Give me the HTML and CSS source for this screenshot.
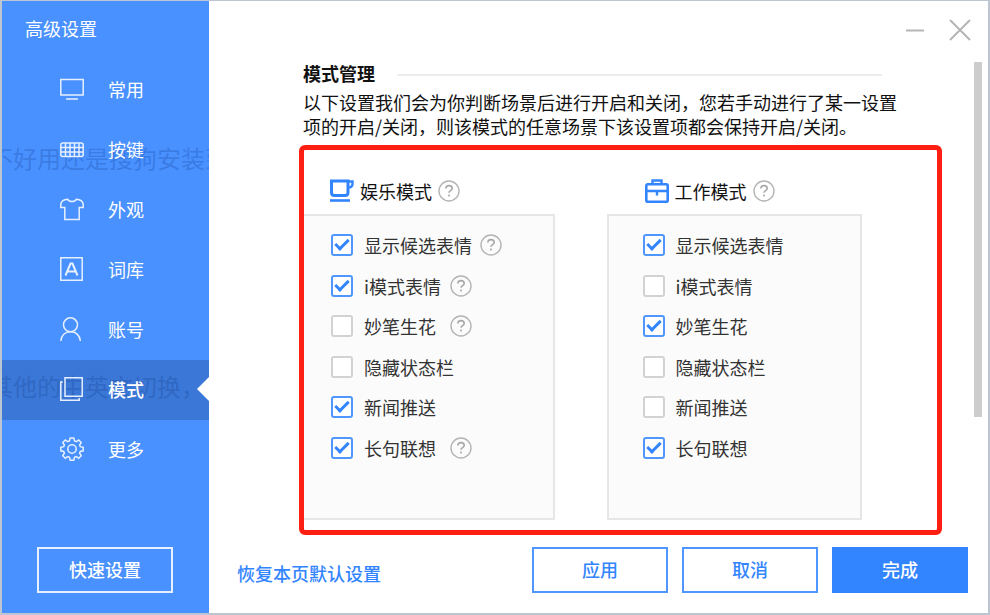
FILE: index.html
```
<!DOCTYPE html>
<html lang="zh-CN">
<head>
  <meta charset="UTF-8" />
  <meta name="viewport" content="width=device-width, initial-scale=1.0"/>
  <title>高级设置</title>
  <link rel="stylesheet" href="styles.css">
</head>
<body>
  <!-- Shared icons -->
  <svg class="sprite" aria-hidden="true">
    <symbol id="help" viewBox="0 0 22 22">
      <circle cx="11" cy="11" r="10" fill="none" stroke="#b4b4b4" stroke-width="1.4"/>
      <path d="M7.8 8.6c0-2 1.4-3 3.2-3s3.2 1 3.2 2.8c0 2.2-3.2 2.3-3.2 4.4M11 14.4v2" fill="none" stroke="#a8a8a8" stroke-width="1.6"/>
    </symbol>
  </svg>

  <div class="window">
    <aside class="sidebar">
      <div class="ghost ghost-top" aria-hidden="true">不好用还是搜狗安装到</div>
      <h1>高级设置</h1>
      <nav>
        <a href="#common">
          <svg class="nav-icon" viewBox="0 0 24 24"><path d="M.8 2.500h22.400v15.500H.8zM6 22h12"/></svg>
          常用
        </a>
        <a href="#keys">
          <svg class="nav-icon" viewBox="0 0 24 24"><rect x=".8" y="6" width="22.400" height="13.500" rx="2"/><path d="M1 10.500h22M1 15h22M5.500 6v13.500M10 6v13.500M14.500 6v13.500M19 6v13.500"/></svg>
          按键
        </a>
        <a href="#skin">
          <svg class="nav-icon" viewBox="0 0 24 24"><path d="M7.500 2.200c1.600 3.200 7.400 3.200 9 0 3.300.2 6.100 1.700 6.700 4.800v3.500h-4v12H4.800v-12h-4V7c.6-3.100 3.400-4.600 6.700-4.800z"/></svg>
          外观
        </a>
        <a href="#words">
          <svg class="nav-icon" viewBox="0 0 24 24"><path d="M.8 .8h21.400v22.400H.8z"/><path class="thick" d="M5.500 18.500L10.500 6.500h2l5 12M7.300 14.500h8.400"/></svg>
          词库
        </a>
        <a href="#account">
          <svg class="nav-icon" viewBox="0 0 24 24"><circle cx="10.500" cy="7.800" r="7"/><path d="M.8 24C1.500 18 5.500 14.800 10.500 14.800S19.500 18 20.400 24"/></svg>
          账号
        </a>
        <a class="active" href="#mode">
          <svg class="nav-icon" viewBox="0 0 24 24"><path d="M5 .8h17.200v18.400H5zM2.800 5H.8v18.200h18.400V21"/></svg>
          模式
        </a>
        <a href="#more">
          <svg class="nav-icon" viewBox="0 0 24 24"><circle cx="12" cy="12" r="4.200"/><path d="M10.200 1h3.600l.7 2.900 1.700.7 2.500-1.600 2.500 2.500-1.600 2.500.7 1.700 2.900.6v3.500l-2.900.7-.7 1.700 1.600 2.500-2.500 2.500-2.500-1.600-1.700.7-.7 2.900h-3.600l-.7-2.900-1.700-.7-2.500 1.600-2.500-2.500 1.600-2.500-.7-1.700-2.900-.7v-3.500l2.900-.6.7-1.700-1.600-2.500 2.500-2.500 2.500 1.600 1.700-.7z"/></svg>
          更多
        </a>
      </nav>
      <div class="ghost ghost-bottom" aria-hidden="true">其他的中英文切换，</div>
      <button class="quick-btn" type="button">快速设置</button>
    </aside>

    <main>
      <div class="titlebar">
        <button type="button" aria-label="最小化">
          <svg viewBox="0 0 22 22"><path d="M2 11.500h18"/></svg>
        </button>
        <button type="button" aria-label="关闭">
          <svg viewBox="0 0 22 22"><path d="M1 1l20 20M21 1L1 21"/></svg>
        </button>
      </div>

      <div class="body">
        <section class="content">
          <h2>模式管理</h2>
          <p>以下设置我们会为你判断场景后进行开启和关闭，您若手动进行了某一设置项的开启/关闭，则该模式的任意场景下该设置项都会保持开启/关闭。</p>

          <div class="modes">
            <div class="mode">
              <h3>
                <svg class="mode-icon" viewBox="0 0 24 24"><path d="M1.500 2h16.500v11.500q0 3-3 3H4.500q-3 0-3-3z" stroke-width="3"/><path d="M18 2.500h4.500v2.500q0 3.500-4.500 3.500" stroke-width="2.400"/><path d="M0 21.500h20" stroke-width="2.600"/></svg>
                娱乐模式
                <svg class="help"><use href="#help"/></svg>
              </h3>
              <div class="panel">
                <ul>
                  <li><label><input type="checkbox" checked><span>显示候选表情</span></label><svg class="help"><use href="#help"/></svg></li>
                  <li><label><input type="checkbox" checked><span>i模式表情</span></label><svg class="help"><use href="#help"/></svg></li>
                  <li><label><input type="checkbox"><span>妙笔生花</span></label><svg class="help"><use href="#help"/></svg></li>
                  <li><label><input type="checkbox"><span>隐藏状态栏</span></label></li>
                  <li><label><input type="checkbox" checked><span>新闻推送</span></label></li>
                  <li><label><input type="checkbox" checked><span>长句联想</span></label><svg class="help"><use href="#help"/></svg></li>
                </ul>
              </div>
            </div>

            <div class="mode mode-work">
              <h3>
                <svg class="mode-icon" viewBox="0 0 24 24"><rect x="1.300" y="5.300" width="21.400" height="17.400" rx="1.500" stroke-width="2.600"/><path d="M7.500 5V1.500h9V5M1 12h22M12 12v4.500" stroke-width="2.400"/></svg>
                工作模式
                <svg class="help"><use href="#help"/></svg>
              </h3>
              <div class="panel">
                <ul>
                  <li><label><input type="checkbox" checked><span>显示候选表情</span></label></li>
                  <li><label><input type="checkbox"><span>i模式表情</span></label></li>
                  <li><label><input type="checkbox" checked><span>妙笔生花</span></label></li>
                  <li><label><input type="checkbox"><span>隐藏状态栏</span></label></li>
                  <li><label><input type="checkbox"><span>新闻推送</span></label></li>
                  <li><label><input type="checkbox" checked><span>长句联想</span></label></li>
                </ul>
              </div>
            </div>
          </div>
        </section>
        <div class="scrollbar"><div class="thumb"></div></div>
      </div>

      <footer>
        <a href="#reset">恢复本页默认设置</a>
        <button type="button">应用</button>
        <button type="button">取消</button>
        <button class="primary" type="button">完成</button>
      </footer>
    </main>
  </div>
</body>
</html>
```
FILE: styles.css
```
* {
  box-sizing: border-box;
  margin: 0;
  padding: 0;
}

body {
  font-family: 'Noto Sans CJK SC', 'Noto Sans', sans-serif;
  font-size: 18px;
  line-height: 24px;
  color: #111;
  background: #fff;
}

button {
  font: inherit;
  cursor: pointer;
}

a {
  text-decoration: none;
}

ul {
  list-style: none;
}

.sprite {
  position: absolute;
  width: 0;
  height: 0;
}

.window {
  display: flex;
  min-height: 100vh;
  border: 2px solid #bcc6d3;
  border-top-width: 1px;
}

/* Sidebar */
.sidebar {
  position: relative;
  display: flex;
  flex-direction: column;
  flex: 0 0 207px;
  background: #4991ff;
  color: #fff;
  overflow: hidden;
}

h1 {
  padding: 15px 23px 20px;
  font-size: 18px;
  font-weight: 400;
}

nav a {
  position: relative;
  display: flex;
  align-items: center;
  gap: 24px;
  height: 60px;
  padding: 0 0 2px 58px;
  color: #fff;
}

nav a.active {
  background: rgba(25, 60, 120, 0.3);
  font-weight: 500;
}

nav a.active::after {
  content: '';
  position: absolute;
  right: 0;
  border: 12px solid transparent;
  border-right-color: #fff;
  border-left: 0;
}

nav {
  position: relative;
  z-index: 1;
}

.nav-icon {
  width: 24px;
  height: 24px;
  fill: none;
  stroke: #e6f0ff;
  stroke-width: 1.5;
  overflow: visible;
}

.nav-icon .thick {
  stroke-width: 2;
}

/* Text showing through the translucent sidebar */
.ghost {
  position: absolute;
  left: -13px;
  font-size: 24px;
  white-space: nowrap;
  color: rgba(20, 70, 160, 0.3);
  pointer-events: none;
}

.ghost-top {
  top: 145px;
}

.ghost-bottom {
  top: 373px;
}

.quick-btn {
  height: 46px;
  margin: auto 36px 20px 35px;
  padding-bottom: 2px;
  border: 2px solid #e6f0ff;
  background: none;
  color: #fff;
  font-weight: 500;
}

/* Main area */
main {
  display: flex;
  flex-direction: column;
  flex: 1;
  min-width: 0;
}

.titlebar {
  display: flex;
  justify-content: flex-end;
  gap: 23px;
  padding: 18px 17px 20px;
}

.titlebar button {
  width: 22px;
  height: 22px;
  border: 0;
  background: none;
}

.titlebar svg {
  display: block;
  fill: none;
  stroke: #b5b5b5;
  stroke-width: 2;
}

.body {
  display: flex;
  flex: 1;
  margin-bottom: 12px;
}

.scrollbar {
  width: 8px;
  margin-right: 6px;
  padding-top: 1px;
}

.thumb {
  height: 75%;
  background: #cdcdcd;
}

.content {
  flex: 1;
  padding: 0 32px 0 90px;
}

h2 {
  display: flex;
  align-items: center;
  gap: 22px;
  padding-left: 4px;
  margin-right: 60px;
  font-size: 18px;
  font-weight: 700;
}

h2::after {
  content: '';
  flex: 1;
  height: 2px;
  margin-top: 4px;
  background: #ededed;
}

.content p {
  margin: 5px 40px 7px 4px;
}

.modes {
  display: flex;
  gap: 52px;
  padding: 29px 75px 10px 0;
  border: 5px solid #ff1e12;
  border-radius: 6px;
}

.mode {
  flex: 50;
}

.mode-work {
  flex: 51;
}

h3 {
  display: flex;
  align-items: center;
  gap: 6px;
  padding-left: 26px;
  margin-bottom: 11px;
  font-size: 18px;
  font-weight: 400;
}

.mode-work h3 {
  padding-left: 38px;
}

.mode-icon {
  width: 24px;
  height: 24px;
  fill: none;
  stroke: #3385ff;
}

.help {
  flex: none;
  width: 22px;
  height: 22px;
}

.panel {
  padding: 9px 0 50px 27px;
  border: 2px solid #e6e6e6;
  border-left: 0;
  background: #fbfbfb;
}

.mode-work .panel {
  padding-left: 34px;
  border-left: 2px solid #e6e6e6;
}

.panel ul {
  display: grid;
  grid-auto-rows: 1fr;
  min-height: 243px;
}

.panel li,
.panel label {
  display: flex;
  align-items: center;
}

.panel li {
  gap: 8px;
  color: #333;
}

.panel label {
  gap: 11px;
}

.panel span {
  min-width: 78px;
}

input[type='checkbox'] {
  appearance: none;
  width: 22px;
  height: 22px;
  border: 2px solid #d2d2d2;
  border-radius: 3px;
  background: #fff;
}

input[type='checkbox']:checked {
  display: flex;
  align-items: center;
  justify-content: center;
  border-color: #4f97ff;
}

input[type='checkbox']:checked::before {
  content: '';
  box-sizing: border-box;
  width: 14px;
  height: 8px;
  margin-bottom: 4px;
  border: solid #3385ff;
  border-width: 0 0 3px 3px;
  transform: rotate(-45deg);
}

footer {
  display: flex;
  align-items: center;
  gap: 14px;
  padding: 0 20px 20px 28px;
}

footer a {
  margin-right: auto;
  padding-top: 6px;
  color: #3385ff;
  font-weight: 500;
}

footer button {
  width: 136px;
  height: 46px;
  padding-bottom: 2px;
  border: 2px solid #4f97ff;
  background: #fff;
  color: #3385ff;
  font-weight: 500;
}

footer .primary {
  border-color: #3385ff;
  background: #3385ff;
  color: #fff;
}
```
